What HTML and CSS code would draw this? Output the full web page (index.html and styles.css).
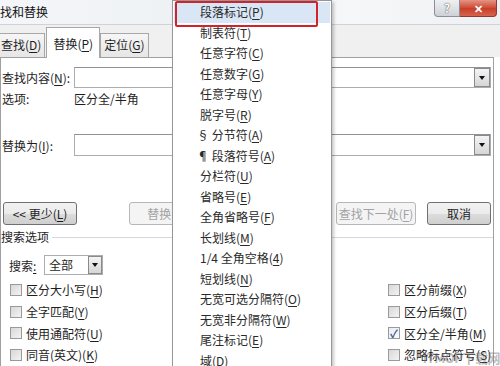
FILE: index.html
```html
<!DOCTYPE html>
<html lang="zh-CN">
  <head>
    <meta charset="UTF-8" />
    <title>查找和替换</title>
    <link rel="stylesheet" href="styles.css">
  </head>
  <body>
    <div class="dialog">
      <div class="titlebar">
        <span class="title">找和替换</span>
        <div class="caption">
          <span class="help">?</span>
          <span class="close">✕</span>
        </div>
      </div>

      <div class="tabs">
        <div class="tab first">查找(<u>D</u>)</div>
        <div class="tab active">替换(<u>P</u>)</div>
        <div class="tab">定位(<u>G</u>)</div>
      </div>

      <div class="page">
        <div class="field find-row">
          <label class="field-label">查找内容(<u>N</u>):</label>
          <div class="combo"><span class="drop"></span></div>
        </div>
        <div class="field options-row">
          <span class="field-label">选项:</span>
          <span>区分全/半角</span>
        </div>
        <div class="field replace-row">
          <label class="field-label">替换为(<u>I</u>):</label>
          <div class="combo tall"><span class="drop"></span></div>
        </div>

        <div class="btn-row">
          <button class="btn btn-less">&lt;&lt; 更少(<u>L</u>)</button>
          <button class="btn btn-replace" disabled>替换(<u>R</u>)</button>
          <button class="btn btn-next" disabled>查找下一处(<u>F</u>)</button>
          <button class="btn btn-cancel">取消</button>
        </div>

        <div class="group-head">搜索选项</div>
        <div class="search-row">
          <span class="search-label">搜索<u>:</u></span>
          <div class="select">全部<span class="drop"></span></div>
        </div>

        <div class="checks">
          <div class="col">
            <div class="check"><span class="box"></span><span>区分大小写(<u>H</u>)</span></div>
            <div class="check"><span class="box"></span><span>全字匹配(<u>Y</u>)</span></div>
            <div class="check"><span class="box"></span><span>使用通配符(<u>U</u>)</span></div>
            <div class="check"><span class="box"></span><span>同音(英文)(<u>K</u>)</span></div>
          </div>
          <div class="col right">
            <div class="check"><span class="box"></span><span>区分前缀(<u>X</u>)</span></div>
            <div class="check"><span class="box"></span><span>区分后缀(<u>T</u>)</span></div>
            <div class="check"><span class="box checked">✓</span><span>区分全/半角(<u>M</u>)</span></div>
            <div class="check"><span class="box"></span><span>忽略标点符号(<u>S</u>)</span></div>
          </div>
        </div>
      </div>

      <ul class="menu">
        <li class="item hot">段落标记(<u>P</u>)</li>
        <li class="item">制表符(<u>T</u>)</li>
        <li class="item">任意字符(<u>C</u>)</li>
        <li class="item">任意数字(<u>G</u>)</li>
        <li class="item">任意字母(<u>Y</u>)</li>
        <li class="item">脱字号(<u>R</u>)</li>
        <li class="item sym">§ 分节符(<u>A</u>)</li>
        <li class="item sym">¶ 段落符号(<u>A</u>)</li>
        <li class="item">分栏符(<u>U</u>)</li>
        <li class="item">省略号(<u>E</u>)</li>
        <li class="item">全角省略号(<u>F</u>)</li>
        <li class="item">长划线(<u>M</u>)</li>
        <li class="item">1/4 全角空格(<u>4</u>)</li>
        <li class="item">短划线(<u>N</u>)</li>
        <li class="item">无宽可选分隔符(<u>O</u>)</li>
        <li class="item">无宽非分隔符(<u>W</u>)</li>
        <li class="item">尾注标记(<u>E</u>)</li>
        <li class="item">域(<u>D</u>)</li>
      </ul>

      <div class="watermark">ITMOP下载网</div>
    </div>
  </body>
</html>
```

FILE: styles.css
```css
:root {
  --border: #a0a0a0;
  --field-border: #abadb3;
  --disabled: #a3a3a3;
  --text: #1e1e1e;
  --menu-hot: #d9e6f6;
  --marker: #d2232a;
}

* {
  box-sizing: border-box;
  margin: 0;
  padding: 0;
}

body {
  width: 500px;
  height: 366px;
  overflow: hidden;
  font-family: "Noto Sans CJK SC", "Noto Sans", sans-serif;
  font-size: 12px;
  color: var(--text);
  background: #fff;
}

u {
  text-decoration: underline;
  text-underline-offset: 2px;
}

.dialog {
  position: relative;
  height: 366px;
}

/* title bar */
.titlebar {
  height: 25px;
  display: flex;
  justify-content: space-between;
  align-items: flex-start;
  background: linear-gradient(90deg, #f4f6f9, #eef1f4 40%, #f6f7f9 70%, #eef0f3);
  border-bottom: 1px solid #cfd2d6;
}

.title {
  line-height: 24px;
  font-size: 12px;
  color: #111;
}

.caption {
  display: flex;
  margin-right: 3px;
}

.help {
  width: 26px;
  height: 17px;
  border: 1px solid #8b9097;
  border-top: none;
  border-radius: 0 0 0 4px;
  background: linear-gradient(#eef0f3, #cdd1d6);
  color: #fff;
  font-size: 12px;
  font-weight: bold;
  line-height: 16px;
  text-align: center;
  text-shadow: 0 0 1px #555, 0 0 1px #555;
}

.close {
  width: 37px;
  height: 17px;
  border: 1px solid #8d3b2e;
  border-top: none;
  border-left: none;
  border-radius: 0 0 4px 0;
  background: linear-gradient(#e59384, #cd4a35 50%, #c53e29 51%, #d8624c);
  color: #fff;
  font-size: 11px;
  font-weight: bold;
  line-height: 16px;
  text-align: center;
}

/* tabs */
.tabs {
  height: 32px;
  display: flex;
  align-items: flex-end;
  background: #f0f0f0;
}

.tab {
  position: relative;
  height: 24px;
  padding: 0 3px;
  border: 1px solid #a7a7a7;
  border-bottom: none;
  background: linear-gradient(#f6f6f6, #e6e6e6);
  line-height: 22px;
}

.tab.first {
  margin-left: -3px;
  margin-right: 1px;
}

.tab.active {
  z-index: 1;
  height: 31px;
  margin-bottom: -1px;
  padding: 0 6px;
  background: #fff;
  line-height: 32px;
}

/* tab page */
.page {
  width: 494px;
  height: 309px;
  padding-left: 1px;
  border: 1px solid var(--border);
  border-bottom: none;
  background: #fff;
}

.field {
  display: flex;
  align-items: center;
}

.field-label {
  width: 72px;
  white-space: nowrap;
}

.find-row {
  margin-top: 9px;
}

.options-row {
  height: 21px;
}

.replace-row {
  margin-top: 25px;
}

.combo {
  width: 417px;
  height: 21px;
  display: flex;
  justify-content: flex-end;
  align-items: stretch;
  border: 1px solid var(--field-border);
  border-top-color: #8f9399;
  background: #fff;
}

.combo.tall {
  height: 22px;
}

.drop {
  position: relative;
  width: 16px;
  border: 1px solid #8a8a8a;
  background: linear-gradient(#f4f4f4, #d6d6d6);
}

.drop::after {
  content: "";
  position: absolute;
  left: 4px;
  top: 50%;
  margin-top: -2px;
  border-left: 3.5px solid transparent;
  border-right: 3.5px solid transparent;
  border-top: 4px solid #111;
}

/* buttons */
.btn-row {
  display: flex;
  margin-top: 46px;
}

.btn {
  height: 23px;
  border: 1px solid #707070;
  border-radius: 3px;
  background: linear-gradient(#f2f2f2, #ebebeb 50%, #dddddd 51%, #cfcfcf);
  font-family: inherit;
  font-size: 12px;
  color: var(--text);
}

.btn:disabled {
  border-color: #b4b8bb;
  background: #f4f4f4;
  color: var(--disabled);
}

.btn-less {
  width: 74px;
  margin-left: 1px;
}

.btn-replace {
  width: 76px;
  margin-left: 52px;
}

.btn-next {
  width: 80px;
  margin-left: auto;
}

.btn-cancel {
  width: 64px;
  margin-left: 11px;
  margin-right: 2px;
}

/* search options */
.group-head {
  display: flex;
  align-items: center;
  margin-top: 4px;
  margin-left: -1px;
  line-height: 16px;
  white-space: nowrap;
}

.group-head::after {
  content: "";
  flex: 1;
  margin-left: 3px;
  border-top: 1px solid #d5d9dd;
}

.search-row {
  display: flex;
  align-items: center;
  margin-top: 10px;
  padding-left: 7px;
}

.search-label {
  width: 35px;
}

.select {
  width: 59px;
  height: 20px;
  display: flex;
  justify-content: space-between;
  align-items: stretch;
  padding-left: 4px;
  border: 1px solid var(--field-border);
  line-height: 18px;
}

.select .drop {
  width: 14px;
}

.select .drop::after {
  left: 3px;
}

.checks {
  display: flex;
  justify-content: space-between;
  margin-top: 4px;
}

.col {
  display: flex;
  flex-direction: column;
}

.col:first-child {
  margin-left: 8px;
}

.col.right {
  width: 105px;
}

.check {
  height: 21.7px;
  display: flex;
  align-items: center;
  gap: 4px;
  white-space: nowrap;
}

.box {
  width: 12px;
  height: 12px;
  flex: none;
  border: 1px solid #9a9a9a;
  background: linear-gradient(135deg, #d8d8d8, #f3f3f3);
  font-size: 11px;
  line-height: 10px;
  text-align: center;
  color: #3c5a96;
}

.box.checked {
  background: linear-gradient(135deg, #e8ecf2, #fafbfc);
  font-weight: bold;
}

/* special characters menu */
.menu {
  position: absolute;
  left: 172px;
  top: 0;
  width: 160px;
  height: 380px;
  padding: 1px;
  list-style: none;
  border: 1px solid #979797;
  background: #fff;
  box-shadow: 2px 2px 3px rgba(0, 0, 0, 0.22);
}

.item {
  position: relative;
  height: 20.5px;
  padding-left: 26px;
  line-height: 20.5px;
  white-space: nowrap;
  color: #2a2a2a;
}

.item.sym {
  padding-left: 23px;
}

.item.hot {
  background: var(--menu-hot);
}

.item.hot::after {
  content: "";
  position: absolute;
  left: 1px;
  top: -1px;
  width: 139px;
  height: 22px;
  border: 2px solid var(--marker);
  border-radius: 2px;
}

.watermark {
  position: absolute;
  right: 0;
  bottom: 0;
  font-size: 13px;
  font-weight: bold;
  line-height: 16px;
  color: rgba(110, 110, 110, 0.45);
  letter-spacing: -0.5px;
}
```
